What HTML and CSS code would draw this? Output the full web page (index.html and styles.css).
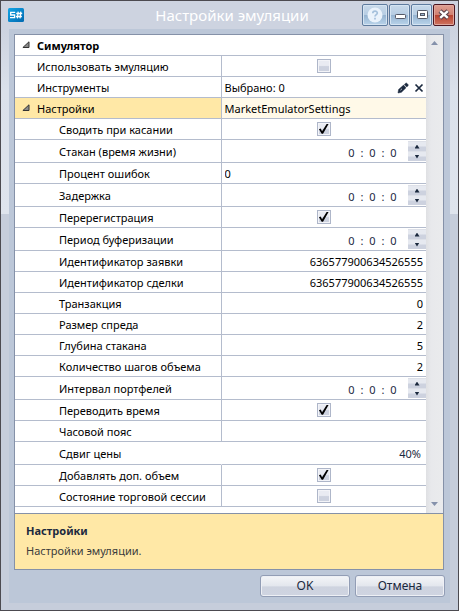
FILE: index.html
```html
<!DOCTYPE html>
<html lang="ru">
<head>
<meta charset="utf-8">
<title>Настройки эмуляции</title>
<link rel="stylesheet" href="styles.css">
</head>
<body>
<div class="window">
  <header class="titlebar">
    <svg class="logo" viewBox="0 0 16 14" aria-hidden="true">
      <defs><linearGradient id="lg" x1="0" y1="0" x2="1" y2="1"><stop offset="0" stop-color="#12a5e6"/><stop offset="1" stop-color="#0068b0"/></linearGradient></defs>
      <rect width="16" height="14" rx="1.5" fill="url(#lg)"/>
      <path d="M7.2 4.3H2.7V7H6.6V9.7H2M8.2 5.5H14.2M7.9 8.5H13.9M10.2 3.6L9.4 10.4M12.8 3.6L12 10.4" fill="none" stroke="#fff" stroke-width="1.3"/>
    </svg>
    <h1 class="title">Настройки эмуляции</h1>
    <div class="caption">
      <button class="cap help" aria-label="Справка"><svg viewBox="0 0 16 16"><circle cx="8" cy="8" r="7.5" fill="#eaf2fb"/><path d="M5.8 6.2C5.8 3.4 10.3 3.5 10.3 6C10.3 7.7 8 7.6 8 9.6M8 10.8V12.4" fill="none" stroke="#a5c0dc" stroke-width="1.7"/></svg></button>
      <button class="cap" aria-label="Свернуть"><svg viewBox="0 0 16 16"><rect x="3.5" y="7.5" width="10" height="4" rx=".8" fill="#fff" stroke="#545866"/></svg></button>
      <button class="cap" aria-label="Развернуть"><svg viewBox="0 0 16 16"><rect x="3.5" y="3.5" width="10" height="8" rx=".8" fill="#fff" stroke="#545866"/><rect x="6.5" y="6.5" width="4" height="2" fill="#9db6d0" stroke="#545866"/></svg></button>
      <button class="cap close" aria-label="Закрыть"><svg viewBox="0 0 16 16"><path d="M4 4L12 11M12 4L4 11" stroke="#59404a" stroke-width="4.4"/><path d="M4.2 4.2L11.8 10.8M11.8 4.2L4.2 10.8" stroke="#fff" stroke-width="2.4"/></svg></button>
    </div>
  </header>
  <main class="client">
    <section class="panel">
      <div class="scroller">
        <table class="grid">
          <tbody>
          <tr><th class="group" colspan="2"><svg class="exp" viewBox="0 0 8 8"><path d="M7 .8V6.5H.9Z" fill="#8b8b8b" stroke="#333"/></svg>Симулятор</th></tr>
          <tr><th><label for="emu">Использовать эмуляцию</label></th><td class="mid"><input type="checkbox" id="emu"></td></tr>
          <tr><th>Инструменты</th><td><div class="pick"><span class="picked">Выбрано: 0</span>
            <button class="tool" aria-label="Изменить"><svg viewBox="0 0 12 12"><path d="M1 11L1.6 7.4L6.6 3.1L9 5.8L4.4 10.3ZM7.4 2.4L8.8 1.2Q9.4 .8 10 1.4L11 2.5Q11.5 3.1 11 3.7L9.8 5Z" fill="#1b293e" stroke="#1b293e" stroke-width=".5"/><path d="M3.4 8.2L5 6.8" stroke="#fff" stroke-width=".7"/></svg></button>
            <button class="tool" aria-label="Очистить"><svg viewBox="0 0 12 12"><path d="M2.5 2.5L9.5 9.5M9.5 2.5L2.5 9.5" stroke="#1b293e" stroke-width="1.7"/></svg></button></div></td></tr>
          <tr class="selected"><th><svg class="exp" viewBox="0 0 8 8"><path d="M7 .8V6.5H.9Z" fill="#8b8b8b" stroke="#333"/></svg>Настройки</th><td>MarketEmulatorSettings</td></tr>
          <tr class="sub"><th><label for="touch">Сводить при касании</label></th><td class="mid"><input type="checkbox" id="touch" checked></td></tr>
          <tr class="sub tall"><th><label for="depth">Стакан (время жизни)</label></th><td><div class="time"><input id="depth" value="0"><i>:</i><input aria-label="Минуты" value="0"><i>:</i><input aria-label="Секунды" value="0"><span class="spin"><button class="up" aria-label="Больше"></button><button class="down" aria-label="Меньше"></button></span></div></td></tr>
          <tr class="sub"><th><label for="err">Процент ошибок</label></th><td><input class="text" id="err" value="0"></td></tr>
          <tr class="sub tall"><th><label for="delay">Задержка</label></th><td><div class="time"><input id="delay" value="0"><i>:</i><input aria-label="Минуты" value="0"><i>:</i><input aria-label="Секунды" value="0"><span class="spin"><button class="up" aria-label="Больше"></button><button class="down" aria-label="Меньше"></button></span></div></td></tr>
          <tr class="sub"><th><label for="rereg">Перерегистрация</label></th><td class="mid"><input type="checkbox" id="rereg" checked></td></tr>
          <tr class="sub tall"><th><label for="buf">Период буферизации</label></th><td><div class="time"><input id="buf" value="0"><i>:</i><input aria-label="Минуты" value="0"><i>:</i><input aria-label="Секунды" value="0"><span class="spin"><button class="up" aria-label="Больше"></button><button class="down" aria-label="Меньше"></button></span></div></td></tr>
          <tr class="sub"><th><label for="oid">Идентификатор заявки</label></th><td><input class="text num" id="oid" value="636577900634526555"></td></tr>
          <tr class="sub"><th><label for="tid">Идентификатор сделки</label></th><td><input class="text num" id="tid" value="636577900634526555"></td></tr>
          <tr class="sub"><th><label for="trn">Транзакция</label></th><td><input class="text num" id="trn" value="0"></td></tr>
          <tr class="sub"><th><label for="spread">Размер спреда</label></th><td><input class="text num" id="spread" value="2"></td></tr>
          <tr class="sub"><th><label for="dpt">Глубина стакана</label></th><td><input class="text num" id="dpt" value="5"></td></tr>
          <tr class="sub"><th><label for="steps">Количество шагов объема</label></th><td><input class="text num" id="steps" value="2"></td></tr>
          <tr class="sub tall"><th><label for="port">Интервал портфелей</label></th><td><div class="time"><input id="port" value="0"><i>:</i><input aria-label="Минуты" value="0"><i>:</i><input aria-label="Секунды" value="0"><span class="spin"><button class="up" aria-label="Больше"></button><button class="down" aria-label="Меньше"></button></span></div></td></tr>
          <tr class="sub"><th><label for="conv">Переводить время</label></th><td class="mid"><input type="checkbox" id="conv" checked></td></tr>
          <tr class="sub"><th><label for="zone">Часовой пояс</label></th><td><input class="text" id="zone" value=""></td></tr>
          <tr class="sub tall plain"><th><label for="shift">Сдвиг цены</label></th><td><input class="text num" id="shift" value="40%"></td></tr>
          <tr class="sub"><th><label for="extra">Добавлять доп. объем</label></th><td class="mid"><input type="checkbox" id="extra" checked></td></tr>
          <tr class="sub"><th><label for="state">Состояние торговой сессии</label></th><td class="mid"><input type="checkbox" id="state"></td></tr>
          </tbody>
        </table>
        <div class="scrollbar"><span class="up"></span><span class="down"></span></div>
      </div>
      <div class="about">
        <h2>Настройки</h2>
        <p>Настройки эмуляции.</p>
      </div>
    </section>
    <footer class="actions">
      <button class="action">OK</button>
      <button class="action">Отмена</button>
    </footer>
  </main>
</div>
</body>
</html>
```
FILE: styles.css
```css
* { box-sizing: border-box; }

body {
  margin: 0;
  font: 11px/16px "Noto Sans", "Open Sans", sans-serif;
  color: #000;
}

button, input { font: inherit; color: inherit; margin: 0; padding: 0; }
svg { display: block; }

.window {
  display: flex;
  flex-direction: column;
  height: 100vh;
  padding: 0 8px 7px;
  border: 1px solid #4c4a50;
  background: linear-gradient(#cdd3e0 0, #cdd3e0 28px, #dbe1eb 90px, #dfe4ed 213px, #c6cddb 213px);
}

.titlebar {
  display: flex;
  align-items: center;
  height: 28px;
  flex: none;
}

.logo { width: 16px; height: 14px; margin-left: -1px; }

.title {
  flex: 1;
  margin: 0;
  padding-left: 112px;
  text-align: center;
  font-size: 15px;
  line-height: 20px;
  font-weight: 400;
  color: #fff;
  white-space: nowrap;
}

.caption { display: flex; gap: 1px; margin-right: -5px; margin-left: 34px; }

.cap {
  display: grid;
  place-items: center;
  width: 21px;
  height: 22px;
  border: 1px solid #5e7b9e;
  border-radius: 2px;
  background: linear-gradient(#c8d9ea 0, #b7cde3 48%, #95b3d1 50%, #b9d3ea 100%);
  box-shadow: inset 0 0 0 1px #d5e4f2;
}
.cap svg { width: 16px; height: 16px; }
.help { width: 26px; }
.close {
  width: 22px;
  border-color: #4d1620;
  background: linear-gradient(#dfa093 0, #d08072 48%, #b7402e 50%, #cf7460 100%);
  box-shadow: inset 0 0 0 1px #e0a69c;
}

.client {
  flex: 1;
  display: flex;
  flex-direction: column;
  min-height: 0;
  padding: 5px 6px 6px 5px;
  background: #bcc7d8;
}

.panel {
  flex: 1;
  display: flex;
  flex-direction: column;
  min-height: 0;
  border: 1px solid #8591a8;
}

.scroller { flex: 1; display: flex; min-height: 0; overflow: hidden; background: #fff; }

.grid {
  flex: 1;
  align-self: flex-start;
  table-layout: fixed;
  border-collapse: separate;
  border-spacing: 0;
}
.grid th, .grid td {
  width: 50%;
  height: 21px;
  padding: 2px 0 0;
  border-bottom: 1px solid #b4bccd;
  white-space: nowrap;
  overflow: hidden;
}
.grid th { padding-left: 22px; text-align: left; font-weight: 400; }
.grid td { padding-left: 3px; border-left: 1px solid #b4bccd; }
.grid .group { font-weight: 700; }
.grid .sub th { padding-left: 44px; }
.grid .tall th, .grid .tall td { height: 23px; }
.grid .tall td { padding-top: 0; }
.grid .plain td { padding-top: 2px; border-left-color: transparent; }
.grid .mid { padding: 0; }
.grid .selected th { background: #ffe8a6; }
.grid .selected td { background: #fff9e8; }

.exp { float: left; width: 8px; height: 8px; margin: 3px 7px 0 -15px; }

input[type="checkbox"] {
  appearance: none;
  display: grid;
  place-items: center;
  width: 14px;
  height: 14px;
  margin: 0 auto;
  border: 1px solid #aeb6c9;
  background: linear-gradient(#e9ebf2 45%, #cdd2df 55%);
  box-shadow: inset 0 0 0 1px #f3f4f8;
}
input[type="checkbox"]:checked::after {
  content: "";
  width: 12px;
  height: 12px;
  background: #000;
  clip-path: polygon(10% 52%, 24% 46%, 36% 68%, 74% 8%, 90% 8%, 44% 90%, 33% 90%);
}

.text {
  display: block;
  width: 100%;
  height: 16px;
  border: 0;
  outline: 0;
  background: none;
}
.num { text-align: right; padding-right: 3px; }
.plain .num { padding-right: 5px; color: #1b293e; }

.pick { display: flex; align-items: center; gap: 4px; padding-right: 1px; }
.picked { flex: 1; }
.tool { width: 12px; height: 12px; border: 0; background: none; }

.time { display: flex; align-items: flex-end; justify-content: flex-end; color: #1b293e; }
.time input { width: 9px; height: 16px; border: 0; text-align: center; background: none; }
.time i { width: 12px; text-align: center; font-style: normal; }

.spin { display: flex; flex-direction: column; width: 18px; margin-left: 10px; }
.spin button {
  display: grid;
  place-items: center;
  height: 10px;
  border: 0;
  border-top: 1px solid #dde0e8;
  background: linear-gradient(#e6e9f0 45%, #cdd2df 55%);
}
.spin button::after { content: ""; width: 5px; height: 4px; background: #1b293e; }
.up::after { clip-path: polygon(50% 0, 100% 100%, 0 100%); }
.down::after { clip-path: polygon(0 0, 100% 0, 50% 100%); }

.scrollbar {
  display: flex;
  flex-direction: column;
  justify-content: space-between;
  align-items: center;
  width: 17px;
  padding: 6px 0 7px;
  background: linear-gradient(90deg, #dfe0e3, #e8e9ec 30%, #eaebed);
}
.scrollbar span::after { content: ""; display: block; width: 7px; height: 4px; background: #8591ab; }

.about {
  flex: none;
  height: 56px;
  padding: 9px 11px;
  border-top: 1px solid #8591a8;
  background: #ffe8a6;
  color: #1b293e;
}
.about h2 { margin: 0 0 4px; font-size: 11px; line-height: 16px; }
.about p { margin: 0; color: #3c3c3c; }

.actions { display: flex; justify-content: flex-end; gap: 5px; padding-top: 5px; margin-right: -1px; }
.action {
  width: 90px;
  height: 22px;
  border: 1px solid #929db5;
  border-radius: 3px;
  background: linear-gradient(#f4f5f8, #e3e6ed 50%, #ced3df 54%, #cfd4e1);
  box-shadow: inset 0 0 0 1px #eef0f5;
  color: #1b293e;
  font-size: 12px;
}
```
